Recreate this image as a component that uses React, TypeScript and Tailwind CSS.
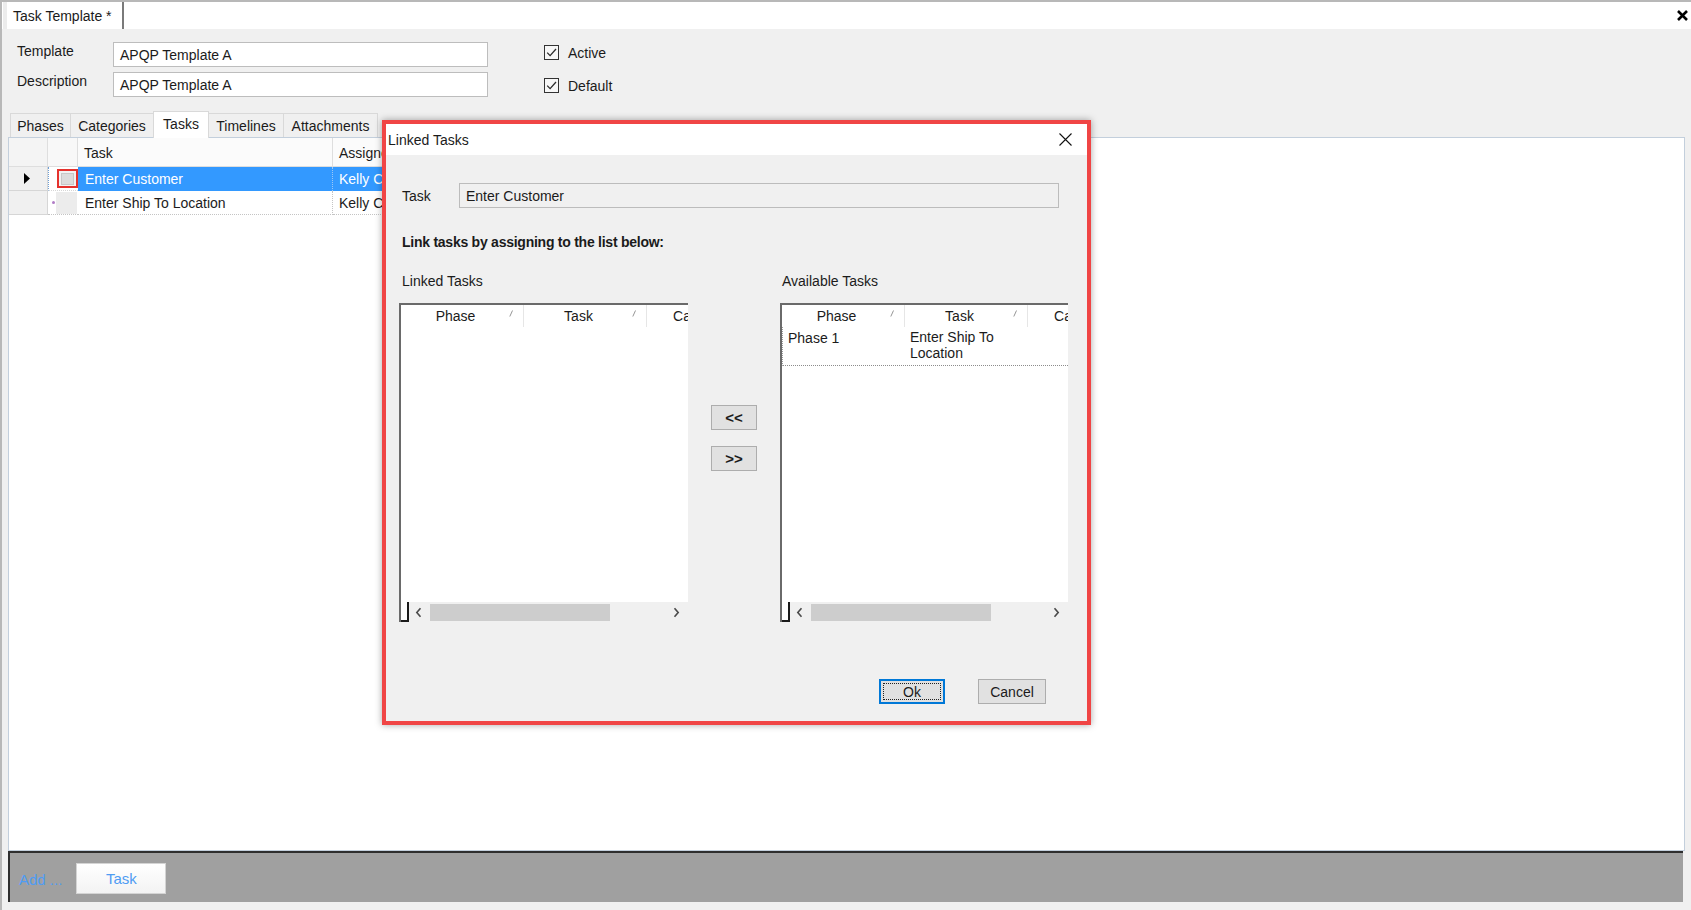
import React from "react";

function Check() {
  return (
    <div className="w-[15px] h-[15px] border border-[#333333] bg-[#f7f7f7] flex items-center justify-center">
      <svg width="13" height="13" viewBox="0 0 13 13">
        <path d="M2.2 6.6 L5.1 9.6 L11 3" stroke="#2b2b2b" strokeWidth="1.3" fill="none" />
      </svg>
    </div>
  );
}

function SortGlyph() {
  return (
    <svg width="4" height="7" viewBox="0 0 4 7" className="absolute right-[10px] top-[5px]">
      <path d="M3.5 0.5 L0.8 6.5" stroke="#8a8a8a" strokeWidth="0.9" fill="none" />
    </svg>
  );
}

function HeaderCell({ label }: { label: string }) {
  return (
    <div className="relative w-[123px] shrink-0 h-[22px] border-r border-[#e6e6e6] flex items-center justify-center pr-[13px] whitespace-nowrap">
      {label}
      <SortGlyph />
    </div>
  );
}

function ScrollBar() {
  return (
    <div className="h-[20px] flex items-stretch shrink-0">
      <div className="w-[8px] border-b-2 border-r-2 border-[#1a1a1a]" />
      <div className="flex-1 bg-[#f0f0f0] flex items-center">
        <div className="w-[18px] flex items-center justify-center">
          <svg width="7" height="11" viewBox="0 0 7 11">
            <path d="M5.5 1.2 L1.8 5.5 L5.5 9.8" stroke="#4a4a4a" strokeWidth="1.6" fill="none" />
          </svg>
        </div>
        <div className="ml-[3px] w-[180px] h-[17px] bg-[#cdcdcd]" />
        <div className="flex-1" />
        <div className="w-[20px] flex items-center justify-center mr-[2px]">
          <svg width="7" height="11" viewBox="0 0 7 11">
            <path d="M1.5 1.2 L5.2 5.5 L1.5 9.8" stroke="#4a4a4a" strokeWidth="1.6" fill="none" />
          </svg>
        </div>
      </div>
    </div>
  );
}

function ListBox({ withRow }: { withRow: boolean }) {
  return (
    <div className="w-full h-[319px] bg-white border-l-2 border-t-2 border-[#6a6a6a] flex flex-col overflow-hidden">
      <div className="flex h-[22px] shrink-0 overflow-hidden">
        <HeaderCell label="Phase" />
        <HeaderCell label="Task" />
        <HeaderCell label="Category" />
      </div>
      {withRow && (
        <div className="flex h-[39px] shrink-0 border-b border-dotted border-[#8c8c8c] border-l border-l-[#9a9a9a] overflow-hidden">
          <div className="w-[122px] shrink-0 pl-[5px] pt-[3px]">Phase 1</div>
          <div className="w-[123px] shrink-0 pl-[5px] pt-[2px]">
            <div className="w-[95px]">Enter Ship To Location</div>
          </div>
        </div>
      )}
      <div className="flex-1" />
      <ScrollBar />
    </div>
  );
}

function WinButton({ label, primary }: { label: string; primary?: boolean }) {
  if (primary) {
    return (
      <div className="relative w-[66px] h-[25px] border-2 border-[#0078d7] bg-[#e1e1e1] flex items-center justify-center">
        <div className="absolute inset-[2px] border border-dotted border-[#222222]" />
        {label}
      </div>
    );
  }
  return (
    <div className="w-[68px] h-[25px] border border-[#adadad] bg-[#e1e1e1] flex items-center justify-center">
      {label}
    </div>
  );
}

function Dialog() {
  return (
    <div className="absolute left-[382px] top-[120px] w-[709px] h-[605px] border-4 border-[#f04545] bg-[#f0f0f0] flex flex-col shadow-[0_0_7px_rgba(0,0,0,0.35)]">
      <div className="h-[31px] shrink-0 bg-white flex items-center justify-between pl-[2px] pr-[15px]">
        <span>Linked Tasks</span>
        <svg width="13" height="13" viewBox="0 0 13 13">
          <path d="M0.5 0.5 L12.5 12.5 M12.5 0.5 L0.5 12.5" stroke="#111111" strokeWidth="1.1" fill="none" />
        </svg>
      </div>
      <div className="flex-1 flex flex-col">
        <div className="mt-[28px] flex items-center pl-[16px]">
          <div className="w-[57px]">Task</div>
          <div className="w-[600px] h-[25px] border border-[#bcbcbc] bg-[#f0f0f0] flex items-center pl-[6px]">
            Enter Customer
          </div>
        </div>
        <div className="mt-[26px] pl-[16px] font-bold text-[14px] leading-[16px] tracking-[-0.25px]">
          Link tasks by assigning to the list below:
        </div>
        <div className="mt-[23px] flex pl-[13px]">
          <div className="w-[289px] shrink-0">
            <div className="pl-[3px] h-[16px]">Linked Tasks</div>
            <div className="mt-[14px]">
              <ListBox withRow={false} />
            </div>
          </div>
          <div className="ml-[23px] w-[46px] shrink-0 pt-[132px] flex flex-col gap-[16px]">
            <div className="h-[25px] border border-[#adadad] bg-[#e1e1e1] flex items-center justify-center font-bold text-[15px]">
              &lt;&lt;
            </div>
            <div className="h-[25px] border border-[#adadad] bg-[#e1e1e1] flex items-center justify-center font-bold text-[15px]">
              &gt;&gt;
            </div>
          </div>
          <div className="ml-[23px] w-[288px] shrink-0">
            <div className="pl-[2px] h-[16px]">Available Tasks</div>
            <div className="mt-[14px]">
              <ListBox withRow={true} />
            </div>
          </div>
        </div>
        <div className="mt-[57px] flex justify-end gap-[33px] pr-[41px]">
          <WinButton label="Ok" primary />
          <WinButton label="Cancel" />
        </div>
      </div>
    </div>
  );
}

function Grid() {
  return (
    <div className="flex flex-col w-[640px]">
      <div className="flex h-[29px]">
        <div className="w-[39px] bg-[#f4f4f4] border-r border-b border-[#dedede]" />
        <div className="w-[30px] bg-[#f8f8f8] border-r border-b border-[#dedede]" />
        <div className="w-[255px] bg-[#fbfbfb] border-r border-b border-[#dedede] pl-[6px] pt-[2px] flex items-center">Task</div>
        <div className="w-[316px] bg-[#fbfbfb] border-b border-[#dedede] pl-[6px] pt-[2px] flex items-center">Assigned To</div>
      </div>
      <div className="flex h-[24px]">
        <div className="w-[39px] bg-[#f0f0f0] border-r border-b border-[#d6d6d6] flex items-center pl-[15px]">
          <svg width="6" height="11" viewBox="0 0 6 11">
            <path d="M0 0 L6 5.5 L0 11 Z" fill="#000000" />
          </svg>
        </div>
        <div className="w-[30px] border-l border-dotted border-l-[#6f9fd6] border-b border-b-[#d6d6d6] flex items-center justify-end">
          <div className="w-[21px] h-[19px] border-2 border-[#e5322d] bg-[#f2f2f2] flex items-center justify-center">
            <div className="w-[13px] h-[12px] bg-[#dcdcdc] border border-[#c8c8c8]" />
          </div>
        </div>
        <div className="w-[255px] bg-[#3399ff] text-white pl-[7px] flex items-center border-r border-dotted border-[#9cc8f5]">
          Enter Customer
        </div>
        <div className="w-[316px] bg-[#3399ff] text-white pl-[6px] flex items-center">Kelly Chen</div>
      </div>
      <div className="flex h-[24px]">
        <div className="w-[39px] bg-[#f0f0f0] border-r border-b border-[#d6d6d6]" />
        <div className="w-[30px] border-b border-dotted border-b-[#c4c4c4] flex items-center">
          <div className="ml-[4px] w-[3px] h-[3px] bg-[#b07cc6] rounded-full" />
          <div className="ml-[1px] w-[21px] h-[22px] bg-[#ececec]" />
        </div>
        <div className="w-[255px] pl-[7px] flex items-center border-r border-b border-dotted border-[#c4c4c4]">
          Enter Ship To Location
        </div>
        <div className="w-[316px] pl-[6px] flex items-center border-b border-dotted border-[#c4c4c4]">Kelly Chen</div>
      </div>
    </div>
  );
}

export default function App() {
  return (
    <div className="relative w-[1691px] h-[910px] overflow-hidden bg-[#f0f0f0] text-[14px] leading-[16px] text-[#1b1b1b] [font-family:'Liberation_Sans',Arial,sans-serif]">
      <div className="flex flex-col h-full border-t-2 border-l-2 border-[#b8b8b8]">
        <div className="h-[27px] shrink-0 bg-white flex items-stretch">
          <div className="ml-[1px] w-[4px] bg-[#ececec]" />
          <div className="w-[117px] pl-[6px] flex items-center border-r-2 border-[#7a7a7a]">Task Template *</div>
          <div className="flex-1" />
          <div className="flex items-center pr-[3px]">
            <svg width="11" height="11" viewBox="0 0 11 11">
              <path d="M1 1 L10 10 M10 1 L1 10" stroke="#000000" strokeWidth="2.6" fill="none" />
            </svg>
          </div>
        </div>

        <div className="h-[82px] shrink-0 flex pt-[13px] pl-[15px]">
          <div className="flex flex-col gap-[5px]">
            <div className="flex items-start">
              <div className="w-[96px] pt-[1px]">Template</div>
              <div className="w-[375px] h-[25px] bg-white border border-[#bdbdbd] flex items-center pl-[6px]">
                APQP Template A
              </div>
            </div>
            <div className="flex items-start">
              <div className="w-[96px] pt-[1px]">Description</div>
              <div className="w-[375px] h-[25px] bg-white border border-[#bdbdbd] flex items-center pl-[6px]">
                APQP Template A
              </div>
            </div>
          </div>
          <div className="ml-[56px] pt-[3px] flex flex-col gap-[18px]">
            <div className="flex items-center gap-[9px] h-[15px]">
              <Check />
              <span>Active</span>
            </div>
            <div className="flex items-center gap-[9px] h-[15px]">
              <Check />
              <span>Default</span>
            </div>
          </div>
        </div>

        <div className="h-[26px] shrink-0 flex items-end pl-[8px]">
          <div className="w-[60px] h-[24px] bg-[#f0f0f0] border-t border-l border-[#d9d9d9] flex items-center justify-center">Phases</div>
          <div className="w-[83px] h-[24px] bg-[#f0f0f0] border-t border-l border-[#d9d9d9] flex items-center justify-center">Categories</div>
          <div className="relative z-10 w-[56px] h-[27px] -mb-[1px] bg-white border-t border-l border-r border-[#d9d9d9] flex items-center justify-center pb-[3px]">Tasks</div>
          <div className="w-[74px] h-[24px] bg-[#f0f0f0] border-t border-[#d9d9d9] flex items-center justify-center">Timelines</div>
          <div className="w-[95px] h-[24px] bg-[#f0f0f0] border-t border-l border-r border-[#d9d9d9] flex items-center justify-center">Attachments</div>
        </div>

        <div className="flex-1 ml-[6px] mr-[6px] bg-white border border-[#c3cfdc] overflow-hidden">
          <Grid />
        </div>

        <div className="h-[51px] shrink-0 ml-[6px] mr-[8px] bg-[#a0a0a0] border-t-2 border-l-2 border-[#2e2e2e] flex items-start pt-[10px] pl-[9px]">
          <span className="mt-[8px] text-[15px] leading-[17px] text-[#4f9cf3]">Add ...</span>
          <div className="ml-[14px] w-[90px] h-[31px] bg-gradient-to-b from-white to-[#f3f3f3] border border-[#d4d4d4] flex items-center justify-center text-[15px] text-[#4f9cf3]">
            Task
          </div>
        </div>
        <div className="h-[8px] shrink-0" />
      </div>
      <Dialog />
    </div>
  );
}
